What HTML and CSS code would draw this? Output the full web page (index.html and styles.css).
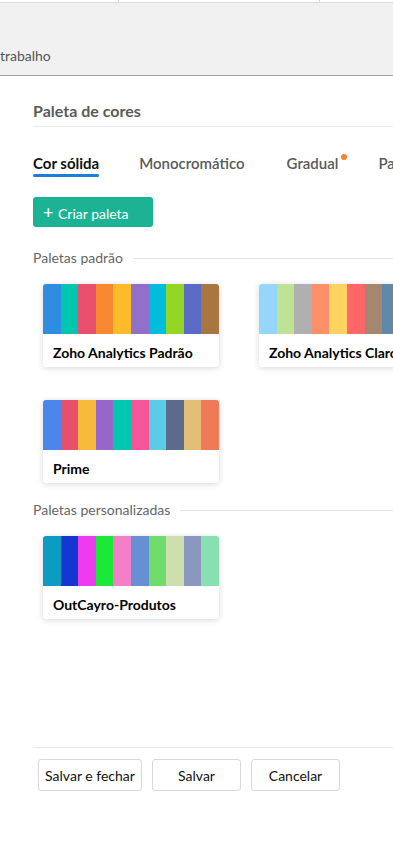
FILE: index.html
```html
<!DOCTYPE html>
<html lang="pt">
<head>
  <meta charset="UTF-8" />
  <meta name="viewport" content="width=device-width, initial-scale=1.0"/>
  <title>Paleta de cores</title>
  <link rel="stylesheet" href="styles.css">
</head>
<body>

  <div class="topbar">
    <div class="top-cells">
      <div class="cell cell-a"></div>
      <div class="cell cell-b"></div>
      <div class="cell cell-c"></div>
    </div>
    <div class="crumb">trabalho</div>
  </div>

  <div class="panel">
    <h2 class="panel-title">Paleta de cores</h2>

    <div class="tabs">
      <div class="tab active">Cor sólida</div>
      <div class="tab">Monocromático</div>
      <div class="tab has-dot">Gradual</div>
      <div class="tab">Paletas</div>
    </div>

    <button class="create-btn"><span class="plus">+</span> Criar paleta</button>

    <div class="section">
      <div class="section-head"><span>Paletas padrão</span></div>
      <div class="cards">
        <div class="card">
          <div class="swatches">
            <i style="background:#2e8de0"></i><i style="background:#00c5b0"></i><i style="background:#e8506e"></i><i style="background:#f7882f"></i><i style="background:#fdbb2a"></i><i style="background:#9170cb"></i><i style="background:#00bedb"></i><i style="background:#93d625"></i><i style="background:#5b6cc8"></i><i style="background:#a8763e"></i>
          </div>
          <div class="card-name">Zoho Analytics Padrão</div>
        </div>
        <div class="card">
          <div class="swatches">
            <i style="background:#95d7fb"></i><i style="background:#bde394"></i><i style="background:#b0b0b0"></i><i style="background:#fc9068"></i><i style="background:#fed35f"></i><i style="background:#ff6769"></i><i style="background:#a58670"></i><i style="background:#6288a8"></i><i style="background:#c9a0dc"></i><i style="background:#7fcdbb"></i>
          </div>
          <div class="card-name">Zoho Analytics Claro</div>
        </div>
        <div class="card">
          <div class="swatches">
            <i style="background:#4a86ec"></i><i style="background:#e84f6b"></i><i style="background:#f9b93b"></i><i style="background:#9767c7"></i><i style="background:#00c8b0"></i><i style="background:#f7559a"></i><i style="background:#5ccbe6"></i><i style="background:#5b6b8e"></i><i style="background:#e3be78"></i><i style="background:#ee7a58"></i>
          </div>
          <div class="card-name">Prime</div>
        </div>
      </div>
    </div>

    <div class="section">
      <div class="section-head"><span>Paletas personalizadas</span></div>
      <div class="cards">
        <div class="card">
          <div class="swatches">
            <i style="background:#0b9cbf"></i><i style="background:#1537d1"></i><i style="background:#ee3bef"></i><i style="background:#1ce83a"></i><i style="background:#f47fc8"></i><i style="background:#6590d4"></i><i style="background:#6fdc6c"></i><i style="background:#cddfad"></i><i style="background:#8d96be"></i><i style="background:#88dfb1"></i>
          </div>
          <div class="card-name">OutCayro-Produtos</div>
        </div>
      </div>
    </div>

    <div class="footer">
      <button class="btn btn-wide">Salvar e fechar</button>
      <button class="btn">Salvar</button>
      <button class="btn">Cancelar</button>
    </div>
  </div>

</body>
</html>
```

FILE: styles.css
```css
body {
  margin: 0;
  font-family: Lato, 'Open Sans', sans-serif;
  background: #ffffff;
  color: #222;
  width: 393px;
  min-height: 844px;
  overflow: hidden;
  display: flex;
  flex-direction: column;
}

.topbar {
  height: 75px;
  background: #f1f1f1;
  border-bottom: 1px solid #a3a3a3;
  flex-shrink: 0;
}

.top-cells {
  display: flex;
  height: 2px;
  background: #fff;
  border-bottom: 1px solid #dcdcdc;
}

.cell {
  border-right: 1px solid #d6d6d6;
}

.cell-a { width: 118px; }
.cell-b { width: 200px; }
.cell-c { flex: 1; border-right: none; }

.crumb {
  margin-top: 44px;
  font-size: 14px;
  line-height: 17px;
  color: #555;
}

.panel {
  flex: 1;
  display: flex;
  flex-direction: column;
  padding-left: 33px;
  width: 700px;
}

.panel-title {
  margin: 25px 0 0;
  padding-bottom: 5px;
  font-size: 16px;
  line-height: 20px;
  font-weight: bold;
  color: #5a5a5a;
  border-bottom: 1px solid #ededed;
}

.tabs {
  display: flex;
  gap: 40px;
  margin-top: 26px;
  white-space: nowrap;
}

.tab {
  position: relative;
  font-size: 15px;
  line-height: 20px;
  font-weight: 600;
  color: #5a5a5a;
  padding-bottom: 4px;
}

.tab.active {
  color: #111;
  font-weight: bold;
}

.tab.active::after {
  content: "";
  position: absolute;
  left: 0;
  right: 0;
  bottom: 0;
  height: 3px;
  border-radius: 2px;
  background: #1a7fd9;
}

.tab.has-dot {
  margin-left: 2px;
}

.tab.has-dot::after {
  content: "";
  position: absolute;
  right: -9px;
  top: 1px;
  width: 6px;
  height: 6px;
  border-radius: 50%;
  background: #f5832b;
}

.create-btn {
  align-self: flex-start;
  margin-top: 20px;
  width: 120px;
  height: 30px;
  border: none;
  border-radius: 3px;
  background: #1bb394;
  color: #fff;
  font-family: inherit;
  font-size: 14px;
  padding: 0 0 0 10px;
  text-align: left;
  cursor: pointer;
}

.create-btn .plus {
  font-size: 18px;
  margin-right: 1px;
}

.section {
  margin-top: 23px;
}

.section + .section {
  margin-top: 19px;
}

.section-head {
  display: flex;
  align-items: center;
  gap: 10px;
  font-size: 14px;
  line-height: 16px;
  color: #666;
  width: 360px;
}

.section-head::after {
  content: "";
  flex: 1;
  height: 1px;
  background: #e6e6e6;
}

.cards {
  display: grid;
  grid-template-columns: repeat(2, 176px);
  column-gap: 40px;
  row-gap: 33px;
  margin-top: 18px;
  padding-left: 10px;
}

.card {
  width: 176px;
  height: 83px;
  border-radius: 3px;
  overflow: hidden;
  background: #fff;
  box-shadow: 0 1px 6px rgba(0, 0, 0, 0.16);
}

.swatches {
  display: flex;
  height: 50px;
}

.swatches i {
  flex: 1;
}

.card-name {
  padding: 11px 10px 0;
  font-size: 14px;
  line-height: 16px;
  font-weight: bold;
  color: #000;
  white-space: nowrap;
}

.footer {
  margin-top: auto;
  margin-bottom: 53px;
  border-top: 1px solid #e8e8e8;
  padding: 11px 0 0 5px;
  display: flex;
  gap: 10px;
}

.btn {
  height: 32px;
  width: 89px;
  padding: 0;
  background: #fff;
  border: 1px solid #d8d8d8;
  border-radius: 3px;
  font-family: inherit;
  font-size: 14px;
  color: #111;
  cursor: pointer;
}

.btn-wide {
  width: 104px;
}
```
